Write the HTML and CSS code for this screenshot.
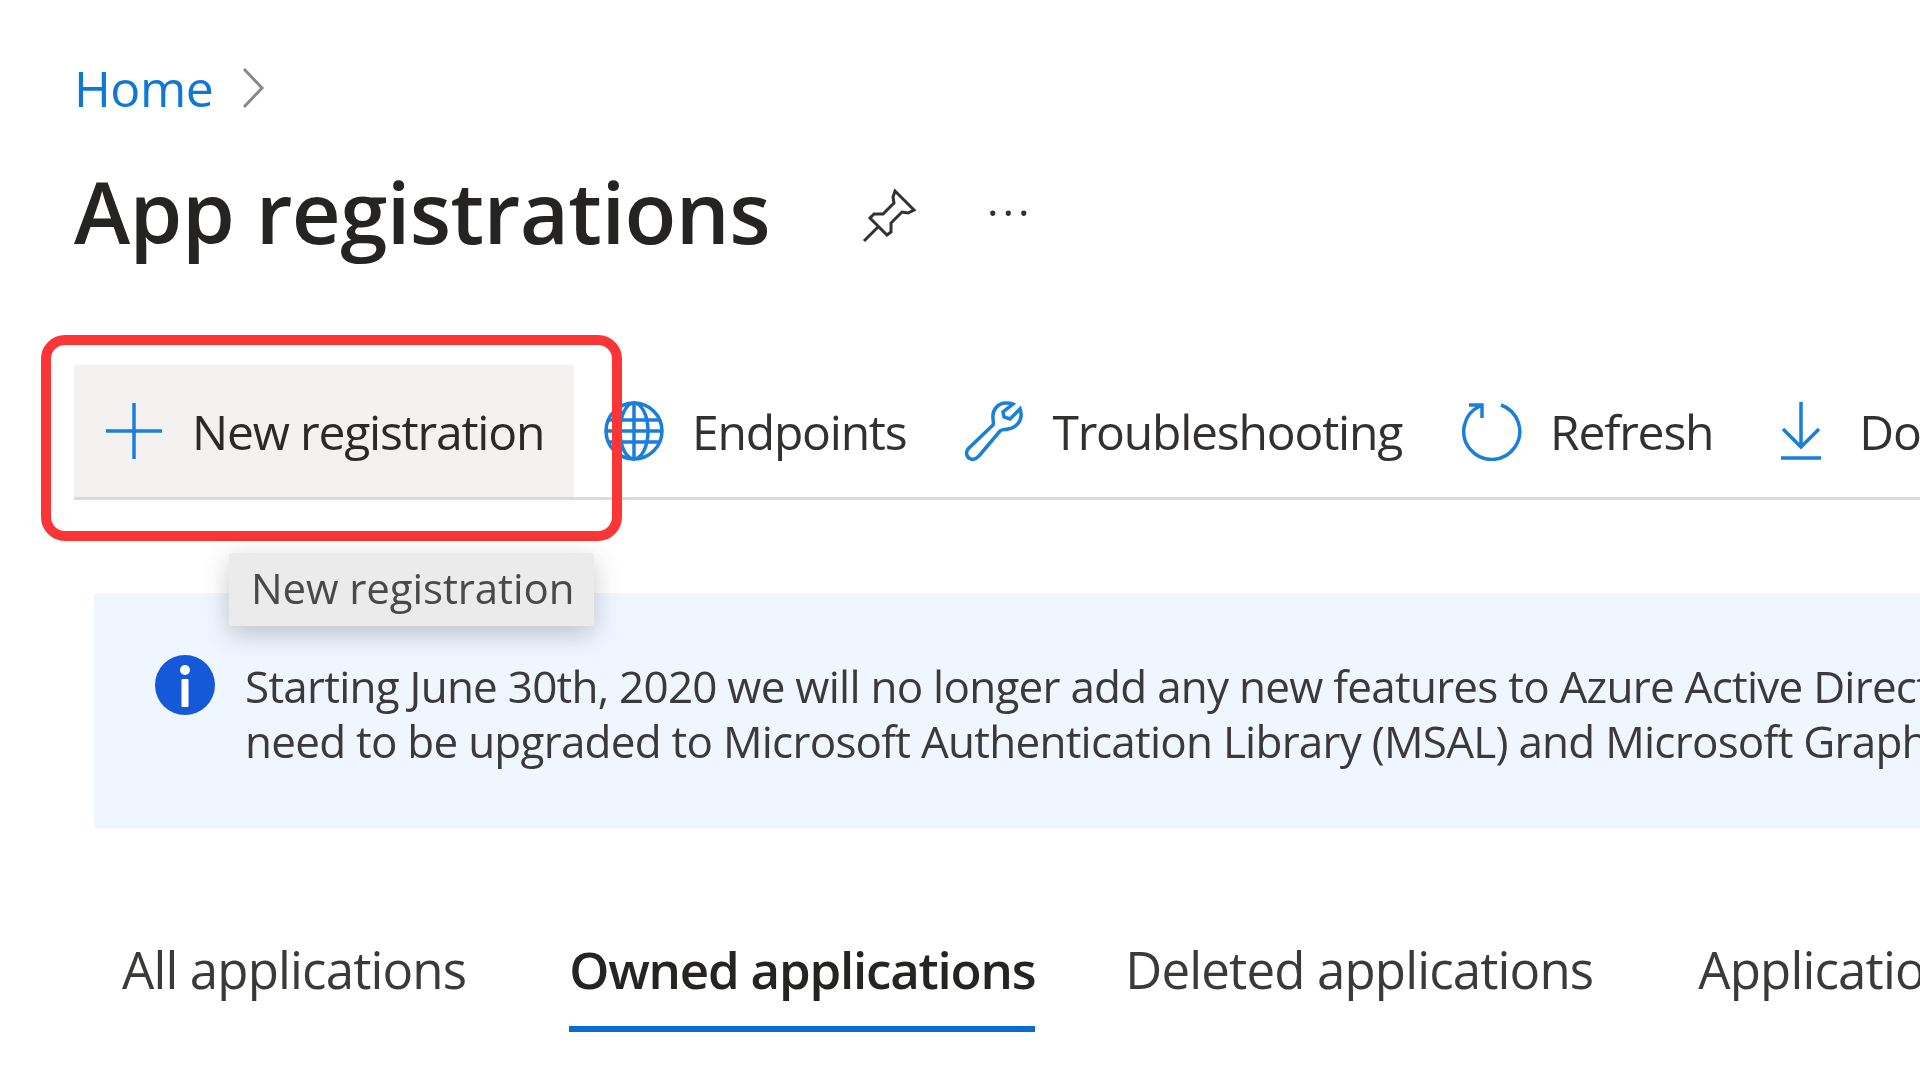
FILE: index.html
```html
<!DOCTYPE html>
<html lang="en">
<head>
<meta charset="utf-8">
<title>App registrations</title>
<link rel="stylesheet" href="styles.css">
</head>
<body>
<main class="page">
  <nav class="crumbs">
    <a class="crumb-link">Home</a>
    <svg class="crumb-sep" viewBox="0 0 24 44"><path d="M3 3 L21 22 L3 41" /></svg>
  </nav>
  <header class="title-row">
    <h1 class="title">App registrations</h1>
    <svg class="pin" viewBox="0 0 56 56"><path d="M34 3 L53 22 L47 25 L41 24 L30 35 L30 44 L26 47 L9 30 L13 26 L22 26 L33 15 L32 9 Z M17 39 L3 53" /></svg>
    <span class="more">···</span>
  </header>
  <div class="toolbar">
    <div class="tool tool-active">
      <svg class="ico" viewBox="0 0 60 60"><path d="M30 2 V58 M2 30 H58" /></svg>
      <span>New registration</span>
    </div>
    <div class="tool">
      <svg class="ico" viewBox="0 0 60 60"><circle cx="30" cy="30" r="28"/><ellipse cx="30" cy="30" rx="14" ry="28"/><path d="M30 2 V58 M5 19 H55 M5 41 H55 M2 30 H58" /></svg>
      <span>Endpoints</span>
    </div>
    <div class="tool tool-wide">
      <svg class="ico" viewBox="0 0 60 60"><path d="M42 2 C34 2 28 9 29 17 C29 20 30 22 29 24 L4 48 C1 52 3 57 7 58 C10 59 13 57 15 55 L36 30 C38 28 41 29 44 28 C52 27 58 20 57 12 L56 8 L46 18 L40 16 L39 11 L49 3 C47 2 44 2 42 2 Z" /></svg>
      <span>Troubleshooting</span>
    </div>
    <div class="tool">
      <svg class="ico" viewBox="0 0 60 60"><path d="M39 4 A28 28 0 1 1 18 5 M7 4 H20 V17" /></svg>
      <span>Refresh</span>
    </div>
    <div class="tool tool-last">
      <svg class="ico" viewBox="0 0 60 60"><path d="M30 1 V46 M12 28 L30 46 L48 28 M10 57 H50" /></svg>
      <span>Download (legacy)</span>
    </div>
    <div class="highlight"></div>
    <div class="tooltip">New registration</div>
  </div>
  <section class="banner">
    <svg class="info" viewBox="0 0 60 60"><circle cx="30" cy="30" r="30"/><circle class="info-mark" cx="30" cy="15" r="5"/><rect class="info-mark" x="26.5" y="24" width="7" height="28" rx="1"/></svg>
    <p class="banner-text">Starting June 30th, 2020 we will no longer add any new features to Azure Active Directory Authentication Library (ADAL)<br>need to be upgraded to Microsoft Authentication Library (MSAL) and Microsoft Graph. Learn more</p>
  </section>
  <div class="tabs">
    <span class="tab">All applications</span>
    <span class="tab tab-on">Owned applications</span>
    <span class="tab">Deleted applications</span>
    <span class="tab tab-last">Applications from personal account</span>
  </div>
</main>
</body>
</html>
```

FILE: styles.css
```css
* { box-sizing: border-box; }
html, body { margin: 0; height: 100%; background: #fff; overflow: hidden; }
.page {
  width: 1920px;
  height: 1080px;
  padding: 56px 0 0 74px;
  overflow: hidden;
  font-family: "Open Sans", "Noto Sans", sans-serif;
  color: #323130;
  white-space: nowrap;
  filter: blur(0.7px);
}
.crumbs { display: flex; align-items: center; height: 64px; gap: 28px; }
.crumb-link { font-size: 50px; line-height: 64px; color: #0f78d4; letter-spacing: -0.5px; }
.crumb-sep { width: 24px; height: 44px; fill: none; stroke: #8a8886; stroke-width: 3; }
.title-row { display: flex; align-items: center; margin-top: 41px; height: 100px; }
.title { margin: 0; font-size: 85px; line-height: 100px; font-weight: 600; color: #252423; letter-spacing: -0.6px; }
.pin { width: 56px; height: 56px; margin: 10px 0 0 91px; fill: none; stroke: #323130; stroke-width: 3; }
.more { margin: 2px 0 0 70px; font-size: 44px; line-height: 40px; letter-spacing: 4px; }
.toolbar { position: relative; display: flex; height: 135px; margin-top: 104px; border-bottom: 3px solid #dcdbda; }
.tool { display: flex; flex: none; align-items: center; gap: 28px; font-size: 48px; letter-spacing: -1.2px; height: 132px; padding-right: 58px; }
.tool-active { background: #f3f2f1; width: 500px; padding-left: 30px; padding-right: 0; margin-right: 30px; color: #2b2a29; }
.tool-wide { padding-right: 60px; }
.tool-last { padding-right: 0; }
.ico { width: 60px; height: 60px; flex: none; fill: none; stroke: #1a7fd8; stroke-width: 3.5; }
.highlight { position: absolute; left: -33px; top: -30px; width: 581px; height: 206px; border: 10px solid #f93535; border-radius: 24px; }
.tooltip { position: absolute; left: 155px; top: 188px; width: 365px; height: 73px; padding-left: 22px; background: #ebebeb; color: #4a4948; font-size: 42px; line-height: 70px; letter-spacing: -0.1px; border-radius: 3px; box-shadow: 0 8px 26px rgba(60,60,70,.28); z-index: 2; }
.banner { display: flex; margin: 93px 0 0 20px; height: 236px; background: #eff6ff; padding: 62px 0 0 61px; border-radius: 4px 0 0 4px; }
.info { width: 60px; height: 60px; flex: none; fill: #1559d8; }
.info-mark { fill: #fff; }
.banner-text { margin: 0 0 0 30px; font-size: 44px; line-height: 55px; color: #3b3a39; letter-spacing: -0.75px; padding-top: 4px; }
.tabs { display: flex; gap: 90px; margin: 104px 0 0 48px; }
.tab { font-size: 51px; line-height: 72px; height: 99px; letter-spacing: -0.85px; color: #3b3a39; }
.tab-on { font-weight: 600; color: #252423; border-bottom: 6px solid #0b6ccb; margin-left: 13px; letter-spacing: -1.2px; }
.tab-last { margin-left: 15px; }
```
